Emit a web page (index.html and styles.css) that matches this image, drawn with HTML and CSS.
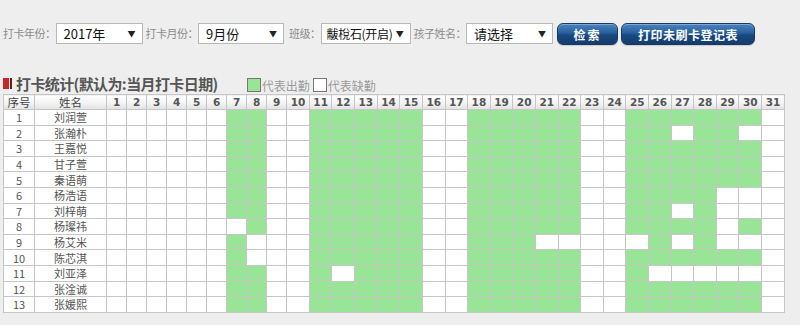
FILE: index.html
```html
<!DOCTYPE html>
<html lang="zh-CN">
<head>
<meta charset="utf-8">
<title>打卡统计</title>
<link rel="stylesheet" href="styles.css">
</head>
<body>
<div class="filters">
  <span class="lbl">打卡年份：</span>
  <div class="sel w87"><span>2017年</span><span class="arrow">▼</span></div>
  <span class="lbl ml3">打卡月份：</span>
  <div class="sel w86"><span>9月份</span><span class="arrow">▼</span></div>
  <span class="lbl ml5">班级：</span>
  <div class="sel w90"><span>黻梲石(开启)</span><span class="arrow">▼</span></div>
  <span class="lbl ml3">孩子姓名：</span>
  <div class="sel w87"><span>请选择</span><span class="arrow">▼</span></div>
  <div class="btn btn-search">检索</div>
  <div class="btn btn-print">打印未刷卡登记表</div>
</div>

<div class="title-row">
  <span class="mark"><i class="mark-a"></i><i class="mark-b"></i></span>
  <h2 class="title">打卡统计(默认为:当月打卡日期)</h2>
  <span class="legend"><i class="box box-g"></i>代表出勤<i class="box box-w"></i>代表缺勤</span>
</div>

<table class="grid">
<colgroup>
<col class="c-no"><col class="c-name">
<col class="c-d1"><col class="c-d1"><col class="c-d1"><col class="c-d1"><col class="c-d1"><col class="c-d1"><col class="c-d1"><col class="c-d1"><col class="c-d1">
<col class="c-d2"><col class="c-d2"><col class="c-d2"><col class="c-d2"><col class="c-d2"><col class="c-d2"><col class="c-d2"><col class="c-d2"><col class="c-d2"><col class="c-d2"><col class="c-d2"><col class="c-d2"><col class="c-d2"><col class="c-d2"><col class="c-d2"><col class="c-d2"><col class="c-d2"><col class="c-d2"><col class="c-d2"><col class="c-d2"><col class="c-d2"><col class="c-d2">
</colgroup>
<thead>
<tr><th class="th-cn">序号</th><th class="th-cn">姓名</th><th>1</th><th>2</th><th>3</th><th>4</th><th>5</th><th>6</th><th>7</th><th>8</th><th>9</th><th>10</th><th>11</th><th>12</th><th>13</th><th>14</th><th>15</th><th>16</th><th>17</th><th>18</th><th>19</th><th>20</th><th>21</th><th>22</th><th>23</th><th>24</th><th>25</th><th>26</th><th>27</th><th>28</th><th>29</th><th>30</th><th>31</th></tr>
</thead>
<tbody>
<tr><td>1</td><td>刘润萱</td><td></td><td></td><td></td><td></td><td></td><td></td><td class="g"></td><td class="g"></td><td></td><td></td><td class="g"></td><td class="g"></td><td class="g"></td><td class="g"></td><td class="g"></td><td></td><td></td><td class="g"></td><td class="g"></td><td class="g"></td><td class="g"></td><td class="g"></td><td></td><td></td><td class="g"></td><td class="g"></td><td class="g"></td><td class="g"></td><td class="g"></td><td class="g"></td><td></td></tr>
<tr><td>2</td><td>张瀚朴</td><td></td><td></td><td></td><td></td><td></td><td></td><td class="g"></td><td class="g"></td><td></td><td></td><td class="g"></td><td class="g"></td><td class="g"></td><td class="g"></td><td class="g"></td><td></td><td></td><td class="g"></td><td class="g"></td><td class="g"></td><td class="g"></td><td class="g"></td><td></td><td></td><td class="g"></td><td class="g"></td><td></td><td class="g"></td><td class="g"></td><td></td><td></td></tr>
<tr><td>3</td><td>王嘉悦</td><td></td><td></td><td></td><td></td><td></td><td></td><td class="g"></td><td class="g"></td><td></td><td></td><td class="g"></td><td class="g"></td><td class="g"></td><td class="g"></td><td class="g"></td><td></td><td></td><td class="g"></td><td class="g"></td><td class="g"></td><td class="g"></td><td class="g"></td><td></td><td></td><td class="g"></td><td class="g"></td><td class="g"></td><td class="g"></td><td class="g"></td><td class="g"></td><td></td></tr>
<tr><td>4</td><td>甘子萱</td><td></td><td></td><td></td><td></td><td></td><td></td><td class="g"></td><td class="g"></td><td></td><td></td><td class="g"></td><td class="g"></td><td class="g"></td><td class="g"></td><td class="g"></td><td></td><td></td><td class="g"></td><td class="g"></td><td class="g"></td><td class="g"></td><td class="g"></td><td></td><td></td><td class="g"></td><td class="g"></td><td class="g"></td><td class="g"></td><td class="g"></td><td class="g"></td><td></td></tr>
<tr><td>5</td><td>秦语萌</td><td></td><td></td><td></td><td></td><td></td><td></td><td class="g"></td><td class="g"></td><td></td><td></td><td class="g"></td><td class="g"></td><td class="g"></td><td class="g"></td><td class="g"></td><td></td><td></td><td class="g"></td><td class="g"></td><td class="g"></td><td class="g"></td><td class="g"></td><td></td><td></td><td class="g"></td><td class="g"></td><td class="g"></td><td class="g"></td><td class="g"></td><td class="g"></td><td></td></tr>
<tr><td>6</td><td>杨浩语</td><td></td><td></td><td></td><td></td><td></td><td></td><td class="g"></td><td class="g"></td><td></td><td></td><td class="g"></td><td class="g"></td><td class="g"></td><td class="g"></td><td class="g"></td><td></td><td></td><td class="g"></td><td class="g"></td><td class="g"></td><td class="g"></td><td class="g"></td><td></td><td></td><td class="g"></td><td class="g"></td><td class="g"></td><td class="g"></td><td></td><td></td><td></td></tr>
<tr><td>7</td><td>刘梓萌</td><td></td><td></td><td></td><td></td><td></td><td></td><td class="g"></td><td class="g"></td><td></td><td></td><td class="g"></td><td class="g"></td><td class="g"></td><td class="g"></td><td class="g"></td><td></td><td></td><td class="g"></td><td class="g"></td><td class="g"></td><td class="g"></td><td class="g"></td><td></td><td></td><td class="g"></td><td class="g"></td><td></td><td class="g"></td><td></td><td></td><td></td></tr>
<tr><td>8</td><td>杨璨祎</td><td></td><td></td><td></td><td></td><td></td><td></td><td></td><td class="g"></td><td></td><td></td><td class="g"></td><td class="g"></td><td class="g"></td><td class="g"></td><td class="g"></td><td></td><td></td><td class="g"></td><td class="g"></td><td class="g"></td><td class="g"></td><td class="g"></td><td></td><td></td><td class="g"></td><td class="g"></td><td class="g"></td><td class="g"></td><td></td><td class="g"></td><td></td></tr>
<tr><td>9</td><td>杨艾米</td><td></td><td></td><td></td><td></td><td></td><td></td><td class="g"></td><td></td><td></td><td></td><td class="g"></td><td class="g"></td><td class="g"></td><td class="g"></td><td class="g"></td><td></td><td></td><td class="g"></td><td class="g"></td><td class="g"></td><td></td><td></td><td></td><td></td><td></td><td class="g"></td><td></td><td class="g"></td><td></td><td></td><td></td></tr>
<tr><td>10</td><td>陈芯淇</td><td></td><td></td><td></td><td></td><td></td><td></td><td class="g"></td><td></td><td></td><td></td><td class="g"></td><td class="g"></td><td class="g"></td><td class="g"></td><td class="g"></td><td></td><td></td><td class="g"></td><td class="g"></td><td class="g"></td><td class="g"></td><td class="g"></td><td></td><td></td><td class="g"></td><td class="g"></td><td class="g"></td><td class="g"></td><td class="g"></td><td class="g"></td><td></td></tr>
<tr><td>11</td><td>刘亚泽</td><td></td><td></td><td></td><td></td><td></td><td></td><td class="g"></td><td class="g"></td><td></td><td></td><td class="g"></td><td></td><td class="g"></td><td class="g"></td><td class="g"></td><td></td><td></td><td class="g"></td><td class="g"></td><td class="g"></td><td class="g"></td><td class="g"></td><td></td><td></td><td class="g"></td><td></td><td></td><td></td><td></td><td></td><td></td></tr>
<tr><td>12</td><td>张淦诚</td><td></td><td></td><td></td><td></td><td></td><td></td><td class="g"></td><td class="g"></td><td></td><td></td><td class="g"></td><td class="g"></td><td class="g"></td><td class="g"></td><td class="g"></td><td></td><td></td><td class="g"></td><td class="g"></td><td class="g"></td><td class="g"></td><td class="g"></td><td></td><td></td><td class="g"></td><td class="g"></td><td class="g"></td><td class="g"></td><td class="g"></td><td class="g"></td><td></td></tr>
<tr><td>13</td><td>张媛熙</td><td></td><td></td><td></td><td></td><td></td><td></td><td class="g"></td><td class="g"></td><td></td><td></td><td class="g"></td><td class="g"></td><td class="g"></td><td class="g"></td><td class="g"></td><td></td><td></td><td class="g"></td><td class="g"></td><td class="g"></td><td class="g"></td><td class="g"></td><td></td><td></td><td class="g"></td><td class="g"></td><td class="g"></td><td class="g"></td><td class="g"></td><td class="g"></td><td></td></tr>
</tbody>
</table>
</body>
</html>
```

FILE: styles.css
```css
* { box-sizing: border-box; }
body {
  margin: 0;
  background: #eeeeee;
  font-family: "Noto Sans CJK SC", "Noto Sans", sans-serif;
  color: #555;
}
.filters {
  display: flex;
  align-items: flex-start;
  padding: 23px 0 0 3px;
  height: 45px;
}
.lbl {
  font-size: 11px;
  letter-spacing: -0.5px;
  color: #8c8c8c;
  line-height: 21px;
  white-space: nowrap;
}
.ml3 { margin-left: 3px; }
.ml5 { margin-left: 5px; }
.sel {
  height: 21px;
  border: 1px solid #b8b8b8;
  background: #fff;
  display: flex;
  align-items: center;
  justify-content: space-between;
  padding: 0 6px 0 7px;
  font-size: 13px;
  color: #111;
  white-space: nowrap;
  overflow: hidden;
}
.w86 { width: 86px; }
.w87 { width: 87px; }
.w90 { width: 90px; padding-left: 5px; font-size: 12px; letter-spacing: -0.3px; }
.arrow { font-size: 8px; color: #222; }
.btn {
  height: 22px;
  border: 1px solid #173a62;
  border-radius: 6px;
  background: linear-gradient(#4a83c0 0%, #28609d 45%, #194a82 55%, #133c6b 100%);
  box-shadow: inset 0 1px 0 rgba(255,255,255,0.3), 0 1px 1px rgba(0,0,0,0.15);
  color: #fff;
  font-size: 12px;
  font-weight: bold;
  display: flex;
  align-items: center;
  justify-content: center;
  letter-spacing: 0.5px;
  white-space: nowrap;
}
.btn-search { width: 61px; margin-left: 4px; letter-spacing: 2px; }
.btn-print { width: 134px; margin-left: 3px; }

.title-row {
  display: flex;
  align-items: center;
  height: 21px;
  margin-top: 28px;
  padding-left: 3px;
}
.mark { display: flex; align-items: center; gap: 1px; width: 13px; }
.mark-a { display: block; width: 6px; height: 11px; background: #c9262b; }
.mark-b { display: block; width: 2px; height: 11px; background: #6d1a1d; }
.title {
  margin: 0;
  font-size: 15px;
  letter-spacing: -0.6px;
  font-weight: bold;
  color: #555;
  line-height: 21px;
  white-space: nowrap;
}
.legend {
  display: flex;
  align-items: center;
  margin-left: 29px;
  font-size: 12px;
  color: #9a9a9a;
  padding-top: 3px;
  white-space: nowrap;
}
.box {
  display: block;
  width: 14px;
  height: 14px;
  border: 1.5px solid #777;
  margin-right: 1px;
}
.box-g { background: #98e598; }
.box-w { background: #fff; margin-left: 3px; }

.grid {
  margin-left: 3px;
  border-collapse: collapse;
  table-layout: fixed;
  width: 782px;
  background: #fff;
  border: 1px solid #b9b9b9;
}
.c-no { width: 31px; }
.c-name { width: 72px; }
.c-d1 { width: 20px; }
.c-d2 { width: 22.6px; }
.grid th {
  height: 15px;
  padding: 0;
  border: 1px solid #c6c6c6;
  background: linear-gradient(#ffffff, #f4f4f4 50%, #e2e2e2);
  font-family: "DejaVu Sans", sans-serif;
  font-size: 10.5px;
  font-weight: bold;
  color: #555;
  text-align: center;
  line-height: 13px;
}
.grid th.th-cn {
  font-family: "Noto Sans CJK SC", sans-serif;
  font-weight: normal;
  font-size: 11.5px;
  line-height: 12px;
  color: #444;
}
.grid td {
  height: 15.6px;
  padding: 0;
  border: 1px solid #c6c6c6;
  font-size: 11px;
  color: #555;
  text-align: center;
  line-height: 12px;
}
.grid td.g { background: #98e598; }
```
